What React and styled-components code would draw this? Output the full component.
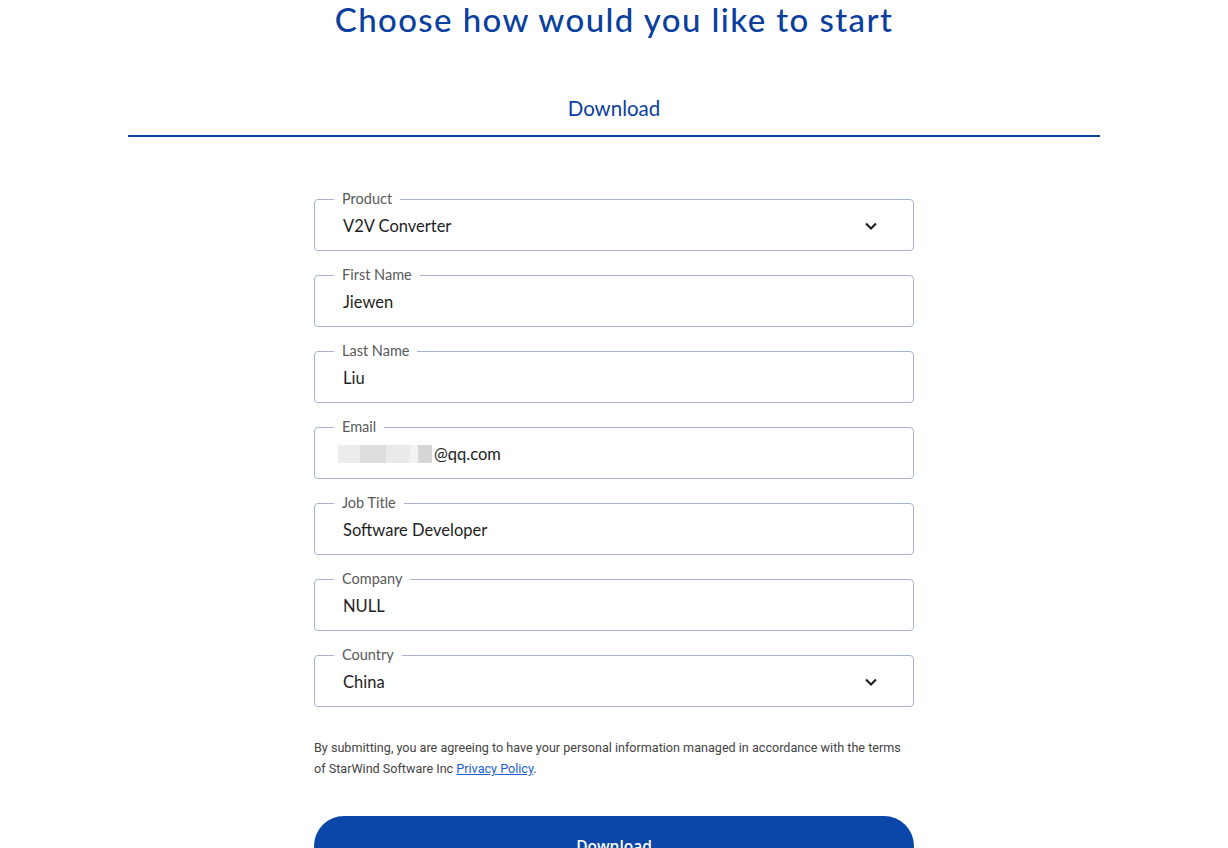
import React from "react";
import styled, { createGlobalStyle } from "styled-components";

const GlobalStyle = createGlobalStyle`
  body {
    margin: 0;
    background: #ffffff;
    font-family: Lato, "Open Sans", sans-serif;
  }
`;

const Page = styled.div`
  width: 100%;
  display: flex;
  flex-direction: column;
  align-items: center;
`;

const Heading = styled.h1`
  margin: 0;
  font-size: 33px;
  line-height: 38px;
  font-weight: 500;
  color: #0b3f9e;
  letter-spacing: 1.4px;
`;

const Tabs = styled.div`
  width: 972px;
  margin-top: 58px;
  border-bottom: 2px solid #0b44a6;
  display: flex;
  justify-content: center;
`;

const Tab = styled.div`
  font-size: 20.5px;
  line-height: 24px;
  color: #0b3f9e;
  padding-bottom: 15px;
`;

const Form = styled.form`
  width: 600px;
  margin-top: 62px;
  display: flex;
  flex-direction: column;
  gap: 24px;
`;

const Field = styled.div`
  position: relative;
  height: 52px;
  box-sizing: border-box;
  padding: 0 35px 0 28px;
  border: 1px solid #a8b3d3;
  border-radius: 4px;
  display: flex;
  align-items: center;
  justify-content: space-between;
`;

const Label = styled.span`
  position: absolute;
  top: -9px;
  left: 19px;
  padding: 0 8px;
  background: #ffffff;
  font-size: 14.5px;
  line-height: 16px;
  color: #5a5a5a;
`;

const Value = styled.div`
  font-size: 16.5px;
  color: #1e1e1e;
  display: flex;
  align-items: center;
  padding-top: 2px;
`;

const Chevron = styled.svg`
  width: 14px;
  height: 14px;
  margin-top: 2px;
`;

const Redacted = styled.span`
  display: inline-flex;
  margin-left: -5px;
  margin-right: 2px;
`;

const Blur = styled.span`
  display: inline-block;
  height: 18px;
  width: ${(p) => p.w}px;
  background: ${(p) => p.c};
`;

const Notice = styled.p`
  margin: 6px 0 0;
  font-family: Roboto, "Liberation Sans", sans-serif;
  font-size: 12.6px;
  line-height: 21px;
  color: #444;
`;

const PolicyLink = styled.a`
  color: #1a5fd6;
  text-decoration: underline;
`;

const Button = styled.button`
  margin-top: 37px;
  width: 600px;
  height: 60px;
  box-sizing: border-box;
  padding: 0;
  border: none;
  border-radius: 32px;
  background: #0a47a8;
  color: #ffffff;
  font-family: "Open Sans", sans-serif;
  font-size: 15.5px;
  font-weight: 600;
  line-height: 20px;
  cursor: pointer;
`;

const ChevronIcon = () => (
  <Chevron viewBox="0 0 14 14">
    <path d="M2 4.5 L7 9.5 L12 4.5" fill="none" stroke="#222" strokeWidth="2.2" />
  </Chevron>
);

const fields = [
  { label: "Product", value: "V2V Converter", select: true },
  { label: "First Name", value: "Jiewen" },
  { label: "Last Name", value: "Liu" },
  { label: "Email", email: true },
  { label: "Job Title", value: "Software Developer" },
  { label: "Company", value: "NULL" },
  { label: "Country", value: "China", select: true },
];

const App = () => {
  return (
    <Page>
      <GlobalStyle />
      <Heading>Choose how would you like to start</Heading>
      <Tabs>
        <Tab>Download</Tab>
      </Tabs>
      <Form>
        {fields.map((f) => (
          <Field key={f.label}>
            <Label>{f.label}</Label>
            <Value>
              {f.email ? (
                <>
                  <Redacted>
                    <Blur w={22} c="#ededed" />
                    <Blur w={26} c="#dedede" />
                    <Blur w={24} c="#eaeaea" />
                    <Blur w={8} c="#f2f2f2" />
                    <Blur w={14} c="#d6d6d6" />
                  </Redacted>
                  @qq.com
                </>
              ) : (
                f.value
              )}
            </Value>
            {f.select && <ChevronIcon />}
          </Field>
        ))}
        <Notice>
          By submitting, you are agreeing to have your personal information managed in
          accordance with the terms of StarWind Software Inc{" "}
          <PolicyLink href="#">Privacy Policy</PolicyLink>.
        </Notice>
      </Form>
      <Button>Download</Button>
    </Page>
  );
};

export default App;
